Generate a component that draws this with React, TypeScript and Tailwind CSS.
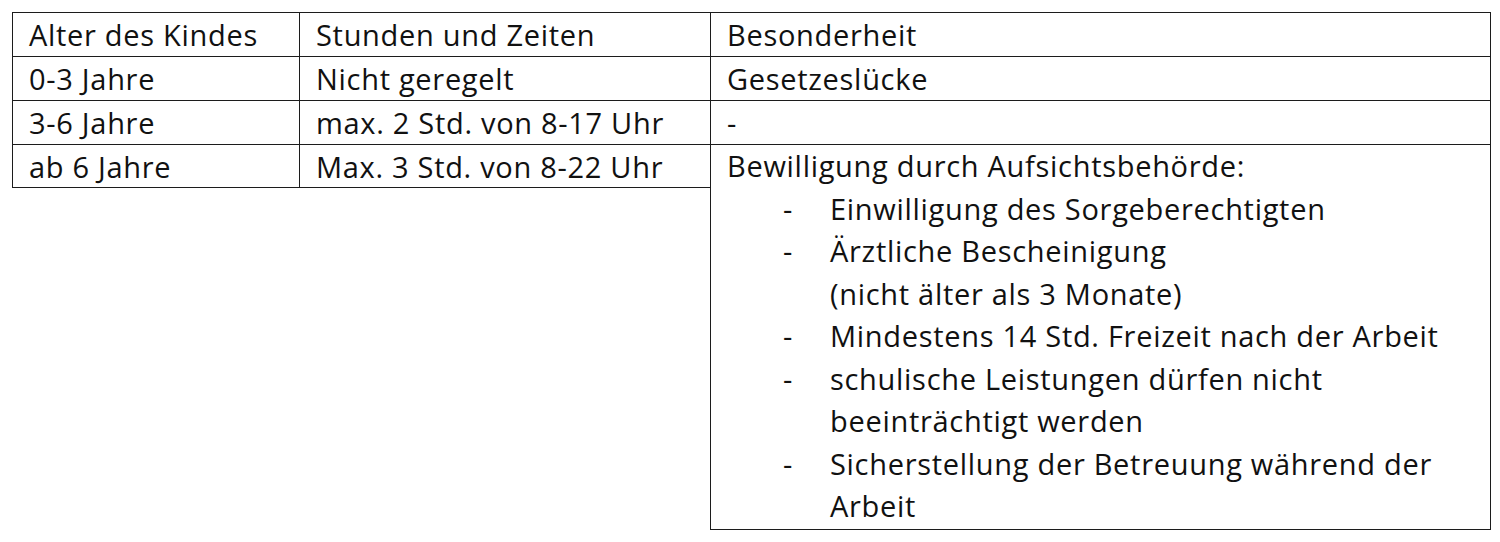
import React from "react";

const rows = [
  { age: "Alter des Kindes", hours: "Stunden und Zeiten", note: "Besonderheit" },
  { age: "0-3 Jahre", hours: "Nicht geregelt", note: "Gesetzeslücke" },
  { age: "3-6 Jahre", hours: "max. 2 Std. von 8-17 Uhr", note: "-" },
];

// each item is a list of pre-broken lines, like the Word original
const conditions: string[][] = [
  ["Einwilligung des Sorgeberechtigten"],
  ["Ärztliche Bescheinigung", "(nicht älter als 3 Monate)"],
  ["Mindestens 14 Std. Freizeit nach der Arbeit"],
  ["schulische Leistungen dürfen nicht", "beeinträchtigt werden"],
  ["Sicherstellung der Betreuung während der", "Arbeit"],
];

const cell = "h-[44px] border-l border-t border-[#1c1c1c] px-[16px] leading-[43px] whitespace-nowrap";

export default function App() {
  return (
    <div
      className="min-h-[542px] bg-white pl-[12px] pt-[12px] text-[29px] font-medium tracking-[0.7px] text-[#111]"
      style={{ fontFamily: "'Open Sans', Lato, sans-serif" }}
    >
      <div className="grid grid-cols-[287px_411px_781px] items-start">
        {rows.map((r) => (
          <React.Fragment key={r.age}>
            <div className={cell}>{r.age}</div>
            <div className={cell}>{r.hours}</div>
            <div className={`${cell} border-r`}>{r.note}</div>
          </React.Fragment>
        ))}
        <div className={`${cell} border-b`}>ab 6 Jahre</div>
        <div className={`${cell} border-b`}>Max. 3 Std. von 8-22 Uhr</div>
        <div className="border border-[#1c1c1c] px-[16px] pb-[1px] leading-[42.5px] whitespace-nowrap">
          <div>Bewilligung durch Aufsichtsbehörde:</div>
          <ul>
            {conditions.map((lines) => (
              <li key={lines[0]} className="ml-[56px] flex">
                <span className="w-[47px] shrink-0">-</span>
                <span>
                  {lines.map((l) => (
                    <div key={l}>{l}</div>
                  ))}
                </span>
              </li>
            ))}
          </ul>
        </div>
      </div>
    </div>
  );
}
